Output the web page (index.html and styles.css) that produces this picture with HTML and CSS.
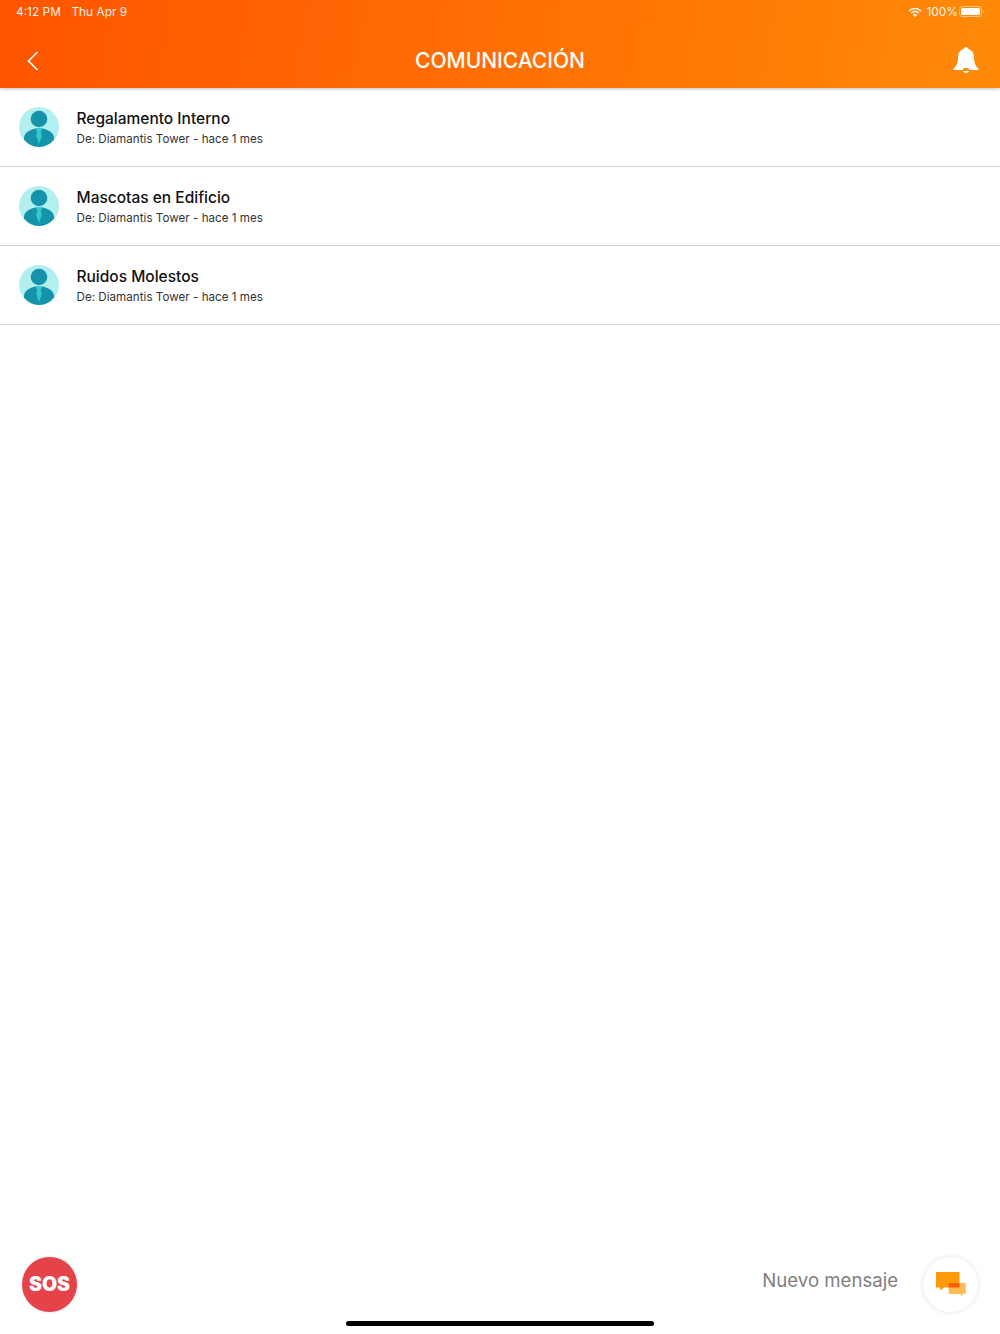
FILE: index.html
```html
<!DOCTYPE html>
<html lang="es">
<head>
    <meta charset="UTF-8">
    <meta name="viewport" content="width=device-width, initial-scale=1.0">
    <title>Comunicación</title>
    <link rel="stylesheet" href="styles.css">
</head>
<body>
    <div class="screen">
        <header class="top">
            <div class="status">
                <div class="status-left">
                    <span>4:12 PM</span>
                    <span>Thu Apr 9</span>
                </div>
                <div class="status-right">
                    <svg class="wifi" viewBox="0 0 14 10" width="14" height="10">
                        <path d="M7 10 4.900 7.800a3 3 0 0 1 4.200 0z" fill="#fff"/>
                        <path d="M3.700 6.600a4.700 4.700 0 0 1 6.600 0l1-1.100a6.200 6.200 0 0 0-8.600 0z" fill="#fff"/>
                        <path d="M1.500 4.400a7.800 7.800 0 0 1 11 0l1-1.100a9.300 9.300 0 0 0-13 0z" fill="#fff"/>
                    </svg>
                    <span class="battery-pct">100%</span>
                    <svg class="battery" viewBox="0 0 26 11" width="26" height="11">
                        <rect x="0.5" y="0.5" width="22" height="10" rx="2.800" fill="none" stroke="#fff" stroke-opacity="0.5"/>
                        <rect x="2" y="2" width="19" height="7" rx="1.500" fill="#fff"/>
                        <path d="M24 3.800c.7.2 1.100.8 1.100 1.700s-.4 1.500-1.100 1.700z" fill="#fff" fill-opacity="0.5"/>
                    </svg>
                </div>
            </div>
            <div class="navbar">
                <svg class="back" viewBox="0 0 12 20" width="12" height="20">
                    <path d="M10.500 1 1.500 10l9 9" fill="none" stroke="#fff" stroke-width="1.700"/>
                </svg>
                <h1>COMUNICACIÓN</h1>
                <svg class="bell" viewBox="0 0 26 27" width="26" height="27">
                    <path d="M13 0c1.300 0 2.200.9 2.300 2.100C19.300 3.100 21 6.400 21 10.500c0 4.800 1 7.700 4.500 11.300V23H.5v-1.200C4 18.200 5 15.300 5 10.500c0-4.100 1.700-7.400 5.700-8.400C10.800.9 11.700 0 13 0z" fill="#fff"/>
                    <path d="M9.500 23.500a3.600 3.600 0 0 1 7 0z" fill="#ff8a08"/>
                    <path d="M10 24h6a3.100 2.800 0 0 1-6 0z" fill="#fff"/>
                </svg>
            </div>
        </header>

        <main class="list">
            <div class="item">
                <svg class="avatar" viewBox="0 0 40 40" width="40" height="40">
                    <circle cx="20" cy="20" r="20" fill="#b2f0ef"/>
                    <circle cx="20" cy="12" r="8.300" fill="#1493ab"/>
                    <path d="M5 32.500V30.500C5.500 26 9.500 23.500 16 21.500h8c6.500 2 10.500 4.500 11 9v2A20 20 0 0 1 20 40 20 20 0 0 1 5 32.500z" fill="#1493ab"/>
                    <path d="M16.500 21.500h7l-1.700 3.500 1 4-2.800 8-2.800-8 1-4z" fill="#35c9c9"/>
                </svg>
                <div class="item-text">
                    <div class="item-title">Regalamento Interno</div>
                    <div class="item-sub">De: Diamantis Tower - hace 1 mes</div>
                </div>
            </div>
            <div class="item">
                <svg class="avatar" viewBox="0 0 40 40" width="40" height="40">
                    <circle cx="20" cy="20" r="20" fill="#b2f0ef"/>
                    <circle cx="20" cy="12" r="8.300" fill="#1493ab"/>
                    <path d="M5 32.500V30.500C5.500 26 9.500 23.500 16 21.500h8c6.500 2 10.500 4.500 11 9v2A20 20 0 0 1 20 40 20 20 0 0 1 5 32.500z" fill="#1493ab"/>
                    <path d="M16.500 21.500h7l-1.700 3.500 1 4-2.800 8-2.800-8 1-4z" fill="#35c9c9"/>
                </svg>
                <div class="item-text">
                    <div class="item-title">Mascotas en Edificio</div>
                    <div class="item-sub">De: Diamantis Tower - hace 1 mes</div>
                </div>
            </div>
            <div class="item">
                <svg class="avatar" viewBox="0 0 40 40" width="40" height="40">
                    <circle cx="20" cy="20" r="20" fill="#b2f0ef"/>
                    <circle cx="20" cy="12" r="8.300" fill="#1493ab"/>
                    <path d="M5 32.500V30.500C5.500 26 9.500 23.500 16 21.500h8c6.500 2 10.500 4.500 11 9v2A20 20 0 0 1 20 40 20 20 0 0 1 5 32.500z" fill="#1493ab"/>
                    <path d="M16.500 21.500h7l-1.700 3.500 1 4-2.800 8-2.800-8 1-4z" fill="#35c9c9"/>
                </svg>
                <div class="item-text">
                    <div class="item-title">Ruidos Molestos</div>
                    <div class="item-sub">De: Diamantis Tower - hace 1 mes</div>
                </div>
            </div>
        </main>

        <footer class="bottom">
            <div class="sos">SOS</div>
            <div class="new-message">
                <span class="new-label">Nuevo mensaje</span>
                <div class="new-btn">
                    <svg viewBox="0 0 30 25" width="30" height="25">
                        <path d="M0 0h23.500v15.500H8L4.500 18.500 4 15.500H0z" fill="#ff9a0a"/>
                        <path d="M12.700 11h17v11h-3.400v2.700L24 22H12.700z" fill="#ffbb55"/>
                        <path d="M12.700 11h10.800v4.500H12.700z" fill="#ff5a05"/>
                    </svg>
                </div>
            </div>
        </footer>
        <div class="home-bar"></div>
    </div>
</body>
</html>
```

FILE: styles.css
```css
* {
    box-sizing: border-box;
}
html, body {
    margin: 0;
    padding: 0;
}
body {
    font-family: Inter, "Liberation Sans", sans-serif;
    background-color: #ffffff;
}
.screen {
    position: relative;
    display: flex;
    flex-direction: column;
    height: 1334px;
    overflow: hidden;
}
.top {
    height: 88px;
    flex-shrink: 0;
    background: linear-gradient(100deg, #ff5400 0%, #ff8a08 100%);
    box-shadow: 0 1px 3px rgba(0, 0, 0, 0.25);
    color: #ffffff;
    z-index: 1;
}
.status {
    display: flex;
    justify-content: space-between;
    align-items: center;
    height: 23px;
    padding: 0 15px 0 16px;
    font-size: 11.900px;
    color: rgba(255, 255, 255, 0.95);
}
.status-left {
    display: flex;
    gap: 10.500px;
}
.status-right {
    display: flex;
    align-items: center;
    gap: 1px;
}
.battery-pct {
    margin-left: 3px;
}
.navbar {
    display: grid;
    grid-template-columns: 1fr auto 1fr;
    align-items: center;
    height: 65px;
    padding: 9px 27px 0 27px;
}
.navbar h1 {
    margin: 0;
    font-size: 21px;
    font-weight: 500;
    color: #ffffff;
}
.back {
    margin-top: 1px;
}
.bell {
    justify-self: end;
    margin-top: 1px;
    margin-right: -6px;
}
.item {
    display: flex;
    align-items: center;
    height: 79px;
    padding: 0 0 0 19px;
    border-bottom: 1px solid #d2d2d2;
}
.avatar {
    flex-shrink: 0;
}
.item-text {
    margin-left: 17.500px;
    padding-top: 1px;
}
.item-title {
    font-size: 15.500px;
    font-weight: 500;
    line-height: 20px;
    color: #111111;
}
.item-sub {
    margin-top: 2px;
    font-size: 11.600px;
    letter-spacing: 0.03px;
    line-height: 16px;
    color: #333333;
}
.bottom {
    display: flex;
    justify-content: space-between;
    align-items: center;
    margin-top: auto;
    padding: 0 22px 22px 22px;
}
.sos {
    display: flex;
    justify-content: center;
    align-items: center;
    width: 55px;
    height: 55px;
    padding-bottom: 2px;
    border-radius: 50%;
    background-color: #e6424a;
    box-shadow: 0 0 3px rgba(0, 0, 0, 0.15);
    color: #ffffff;
    font-size: 19.500px;
    font-weight: 900;
}
.new-message {
    display: flex;
    align-items: center;
    gap: 25px;
}
.new-label {
    margin-bottom: 9px;
    font-size: 18.600px;
    color: #808080;
}
.new-btn {
    display: flex;
    justify-content: center;
    align-items: center;
    width: 55px;
    height: 55px;
    border-radius: 50%;
    background-color: #ffffff;
    box-shadow: 0 0 5px rgba(0, 0, 0, 0.12);
}
.home-bar {
    position: absolute;
    left: 346px;
    bottom: 8px;
    width: 308px;
    height: 5px;
    border-radius: 3px;
    background-color: #000000;
}
```
